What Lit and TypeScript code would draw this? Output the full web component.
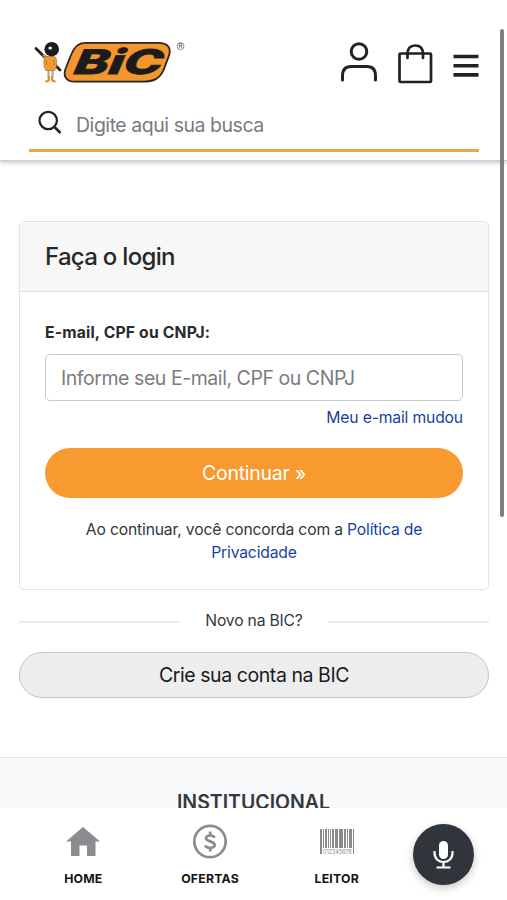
import { LitElement, html, css, svg } from "lit";
import { customElement } from "lit/decorators.js";

@customElement("bic-logo")
class BicLogo extends LitElement {
  static styles = css`
    :host { display: block; width: 152px; height: 44px; }
    svg { display: block; }
    .word { font: italic 800 34px Inter, "Liberation Sans", sans-serif; }
    .mark { font: 500 6px Inter, "Liberation Sans", sans-serif; }
  `;
  render() {
    return html`<svg width="152" height="44" viewBox="0 0 152 44">
      <path d="M2 8.500 L10 16.500 M19 23 L26 30" stroke="#222" stroke-width="2.800" stroke-linecap="round" fill="none"/>
      <path d="M9 15 L14.500 18" stroke="#ef9427" stroke-width="2"/>
      <path d="M14.500 28 V37 M18.500 28 V37" stroke="#aaa49a" stroke-width="2"/>
      <path d="M14.800 36 V40.500 L11.500 41.700 M18.200 36 V40.500 L21.500 41.700" stroke="#dd8c2e" stroke-width="2.200" fill="none"/>
      <path d="M11.500 16.500 H20 Q22.500 17 22.500 20 V26 L20.700 30.500 H11.700 L10 26 V19 Q10 17 11.500 16.500 Z" fill="#f29a32" stroke="#9b6b2c" stroke-width=".6"/>
      <path d="M12.500 20 V25 M20 20 V25" stroke="#a97432" stroke-width=".8"/>
      <circle cx="17.700" cy="9.200" r="7.300" fill="#1d1c1c"/>
      <ellipse cx="16.200" cy="8" rx="1.800" ry="1.500" fill="#fff"/>
      <path d="M51 2.800 H124 C134 2.800 138 8 134.500 17 L130 29 C126 39 119 41.700 109 41.700 H41 C31.500 41.700 28.500 35.500 32 27.500 L37 15 C40 6.800 44 2.800 51 2.800 Z" fill="#f3962f" stroke="#292522" stroke-width="1.800"/>
      <text class="word" x="38" y="34.500" textLength="88" lengthAdjust="spacingAndGlyphs" fill="#1d1c1c" stroke="#1d1c1c" stroke-width=".8" transform="translate(7 0) skewX(-10)">BiC</text>
      <circle cx="146.500" cy="6" r="3.500" fill="none" stroke="#777" stroke-width=".8"/>
      <text class="mark" x="144.500" y="8.200" fill="#555">R</text>
    </svg>`;
  }
}

@customElement("site-header")
class SiteHeader extends LitElement {
  static styles = css`
    :host { display: block; box-sizing: border-box; height: 161px; padding: 39px 28px 0 29px; background: #fff;
      border-bottom: 1px solid #cfcfcf; box-shadow: 0 2px 4px rgba(0,0,0,.2); }
    .top { display: flex; justify-content: space-between; height: 46px; }
    bic-logo { margin: 1px 0 0 5px; }
    .actions { display: flex; }
    .search { display: flex; align-items: center; height: 67px; box-sizing: border-box; border-bottom: 3px solid #f0a248; padding: 16px 0 0 9px; gap: 13px; }
    .search svg { margin-top: -5px; }
    .placeholder { font-size: 19.500px; color: #777b80; letter-spacing: -.46px; }
  `;
  render() {
    return html`
      <div class="top">
        <bic-logo></bic-logo>
        <div class="actions">
          <svg width="142" height="46" viewBox="0 0 142 46" fill="none" stroke="#222" stroke-width="3" stroke-linecap="round">
            <circle cx="22" cy="12.500" r="7.800"/>
            <path d="M5.500 41 V37 Q5.500 27.500 14 27.500 H30 Q38.500 27.500 38.500 37 V41"/>
            <rect x="62.500" y="14.500" width="31.500" height="28.500" rx="1" stroke-width="2.700"/>
            <path d="M70.500 19 V15 Q70.500 6.500 78.200 6.500 Q86 6.500 86 15 V19" stroke-width="2.700"/>
            <path d="M116.500 17.500 H141.500 M116.500 26.700 H141.500 M116.500 35.900 H141.500" stroke-width="3.600" stroke-linecap="butt"/>
          </svg>
        </div>
      </div>
      <div class="search">
        <svg width="25" height="25" viewBox="0 0 25 25" fill="none" stroke="#222" stroke-width="2.200">
          <circle cx="10.200" cy="10.500" r="8.700"/><path d="M16.500 17 L22.500 23" stroke-width="2.500"/>
        </svg>
        <span class="placeholder">Digite aqui sua busca</span>
      </div>`;
  }
}

@customElement("login-card")
class LoginCard extends LitElement {
  static styles = css`
    :host { display: block; box-sizing: border-box; height: 369px; border: 1.500px solid #e3e3e3; border-radius: 5px; overflow: hidden; background: #fff; }
    .head { height: 70px; box-sizing: border-box; background: #f7f7f7; border-bottom: 1.500px solid #dedede; padding: 0 25px; font-size: 24px; line-height: 69px; font-weight: 500; color: #252729; letter-spacing: -.7px; }
    .body { padding: 29px 25px 0; display: flex; flex-direction: column; color: #33373b; }
    .label { font-size: 15.700px; line-height: 24px; font-weight: 700; color: #292b2d; letter-spacing: .18px; }
    .field { height: 47px; box-sizing: border-box; margin-top: 9px; border: 1.500px solid #c6c8ca; border-radius: 5px; padding-left: 15px; line-height: 47px; font-size: 19.500px; color: #797d81; white-space: nowrap; letter-spacing: -.45px; }
    .changed { text-align: right; font-size: 15.700px; line-height: 24px; margin-top: 5px; letter-spacing: -.16px; }
    .go { margin-top: 18px; height: 50px; border-radius: 25px; background: #f89a2f; color: #fff; text-align: center; line-height: 51px; font-size: 19.500px; letter-spacing: -.25px; }
    .terms { margin-top: 20px; text-align: center; font-size: 15.700px; line-height: 23px; letter-spacing: -.17px; }
    .link { color: #173f9f; }
  `;
  render() {
    return html`
      <div class="head">Faça o login</div>
      <div class="body">
        <div class="label">E-mail, CPF ou CNPJ:</div>
        <div class="field">Informe seu E-mail, CPF ou CNPJ</div>
        <div class="changed link">Meu e-mail mudou</div>
        <div class="go">Continuar »</div>
        <div class="terms">Ao continuar, você concorda com a <span class="link">Política de<br>Privacidade</span></div>
      </div>`;
  }
}

const bars = [[0,2],[3,1],[5,2],[8,1],[10,1],[12,2],[15,3],[19,4],[24,2],[27,1],[29,3],[33,1]];

@customElement("tab-bar")
class TabBar extends LitElement {
  static styles = css`
    :host { display: flex; box-sizing: border-box; height: 92px; padding: 14px 0 0 20px; background: #fff; position: relative; }
    .tab { width: 126.700px; display: flex; flex-direction: column; align-items: center; font-size: 12.300px; line-height: 16px; font-weight: 700; color: #151515; letter-spacing: .2px; }
    .tab svg { height: 38px; width: 38px; margin: 0 0 11px; }
    .digits { font: 5.600px Inter, sans-serif; letter-spacing: .3px; }
    .mic { width: 61px; height: 61px; margin: 2px 0 0 13px; border-radius: 50%; background: #30353b; box-shadow: 0 3px 9px rgba(0,0,0,.22); }
    .mic svg { display: block; }
  `;
  render() {
    return html`
      <div class="tab">
        <svg viewBox="0 0 38 38"><path d="M19 5 L36 19.500 H31.500 V34 H23 V23.500 H15.500 V34 H7 V19.500 H2 Z" fill="#8c8c90"/></svg>HOME
      </div>
      <div class="tab">
        <svg viewBox="0 0 38 38" fill="none" stroke="#8c8c8f">
          <circle cx="19" cy="19.500" r="15.700" stroke-width="2.700"/>
          <path d="M23.500 15.700 C22.500 13 15 12.500 15 16 C15 20 23.700 18.700 23.700 23 C23.700 27 15.300 26.500 14.300 23.300 M19.200 9.500 V13.500 M19.200 25.500 V29.500" stroke-width="2.700"/>
        </svg>OFERTAS
      </div>
      <div class="tab">
        <svg viewBox="0 0 38 38" fill="#8a8a8a">
          ${bars.map(([x, w]) => svg`<rect x=${x + 2} y="7" width=${w} height=${x === 0 || x === 33 ? 25 : 19}></rect>`)}
          <text class="digits" x="5" y="32" textLength="29">012345678</text>
        </svg>LEITOR
      </div>
      <div class="mic">
        <svg width="61" height="61" viewBox="0 0 61 61" fill="none" stroke="#fff" stroke-width="2.200">
          <rect x="26" y="17" width="9" height="18" rx="4.500" fill="#fff" stroke="none"/>
          <path d="M21.500 27 V29 C21.500 41 39.500 41 39.500 29 V27 M30.500 38 V43.500 M23.500 43.500 H37.500"/>
        </svg>
      </div>`;
  }
}

@customElement("app-root")
class AppRoot extends LitElement {
  static styles = css`
    :host { display: flex; flex-direction: column; position: relative; height: 900px; overflow: hidden; background: #fff; font-family: Inter, "Liberation Sans", sans-serif; }
    main { padding: 60px 18px 0 19px; height: 596px; box-sizing: border-box; flex: none; }
    .new { display: grid; grid-template-columns: 161px 1fr 161px; align-items: center; height: 62px; font-size: 15.700px; color: #34383c; text-align: center; letter-spacing: -.2px; }
    .new i { height: 2px; background: #ececec; margin-top: 2px; }
    .new span { margin-top: -2px; }
    .create { height: 46px; box-sizing: border-box; border: 1.500px solid #c3c3c3; border-radius: 24px; background: #ededed; color: #1a1a1a; text-align: center; line-height: 45px; font-size: 19.500px; letter-spacing: -.43px; }
    .foot { height: 51px; box-sizing: border-box; flex: none; overflow: hidden; background: #f8f9fb; border-top: 1.500px solid #e2e4e6; padding-top: 31px; text-align: center; font-size: 19.500px; line-height: 26px; font-weight: 600; color: #34383d; }
    .thumb { position: absolute; right: 3px; top: 29px; width: 4px; height: 488px; border-radius: 2px; background: #7f7f7f; z-index: 2; }
  `;
  render() {
    return html`
      <site-header></site-header>
      <main>
        <login-card></login-card>
        <div class="new"><i></i><span>Novo na BIC?</span><i></i></div>
        <div class="create">Crie sua conta na BIC</div>
      </main>
      <div class="foot">INSTITUCIONAL</div>
      <tab-bar></tab-bar>
      <div class="thumb"></div>`;
  }
}
